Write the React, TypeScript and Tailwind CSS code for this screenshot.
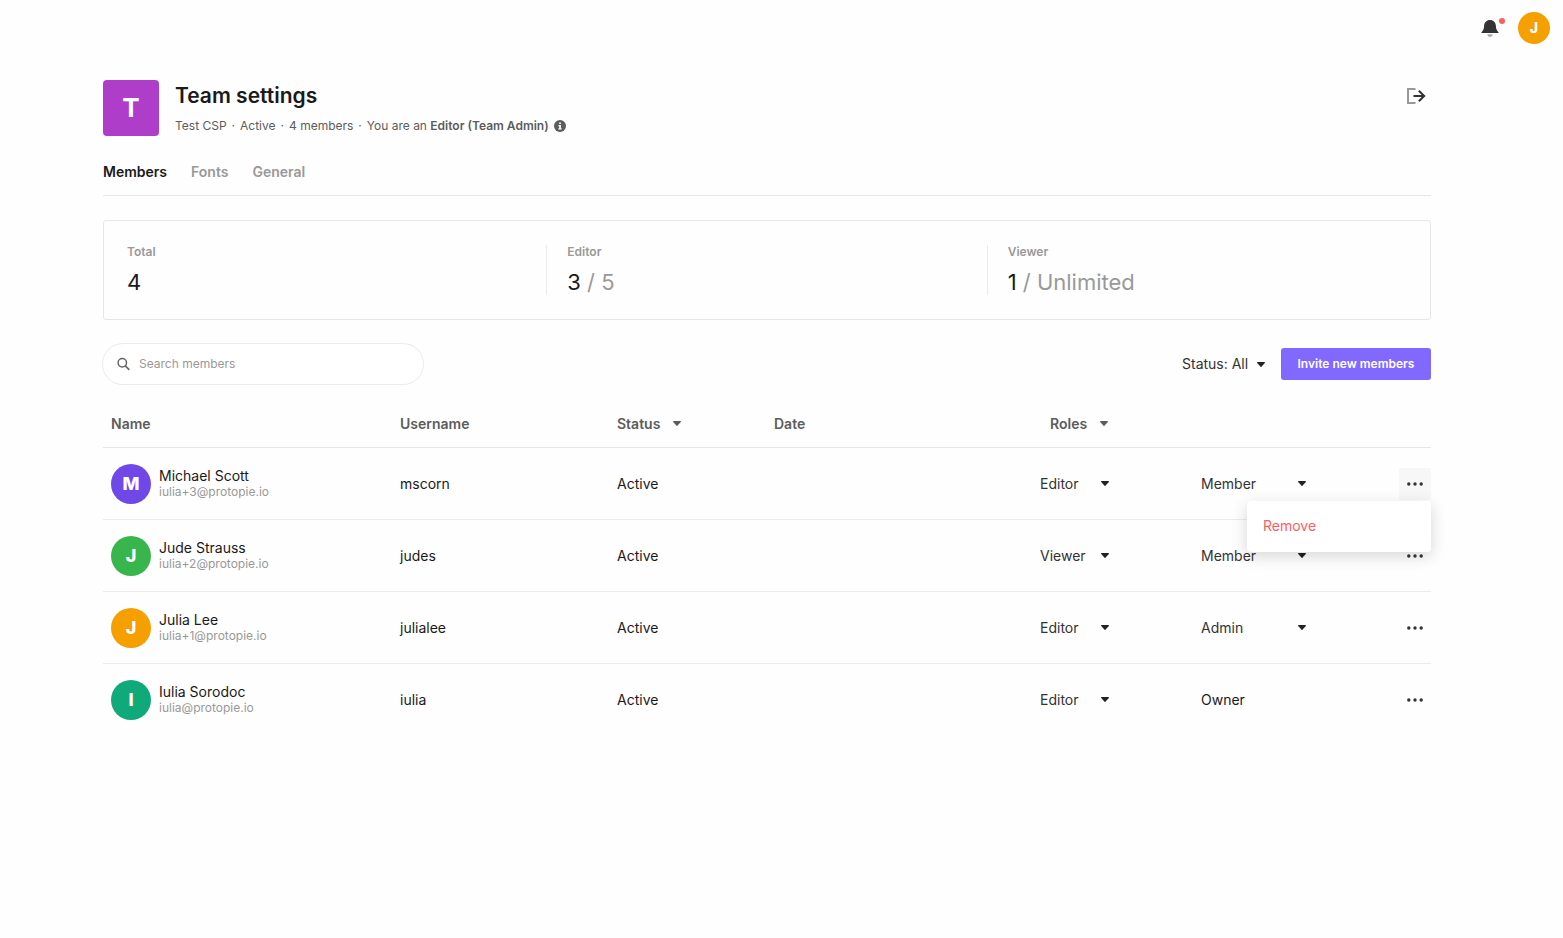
import { useState } from 'react';
import clsx from 'clsx';

type Member = {
  name: string;
  email: string;
  username: string;
  color: string;
  role: string;
  access: string;
};

const MEMBERS: Member[] = [
  { name: 'Michael Scott', email: 'iulia+3@protopie.io', username: 'mscorn', color: 'bg-[#7048e8]', role: 'Editor', access: 'Member' },
  { name: 'Jude Strauss', email: 'iulia+2@protopie.io', username: 'judes', color: 'bg-[#39b54e]', role: 'Viewer', access: 'Member' },
  { name: 'Julia Lee', email: 'iulia+1@protopie.io', username: 'julialee', color: 'bg-[#f59f00]', role: 'Editor', access: 'Admin' },
  { name: 'Iulia Sorodoc', email: 'iulia@protopie.io', username: 'iulia', color: 'bg-[#10a97a]', role: 'Editor', access: 'Owner' },
];

const STATS = [
  { label: 'Total', value: '4', limit: '' },
  { label: 'Editor', value: '3', limit: '5' },
  { label: 'Viewer', value: '1', limit: 'Unlimited' },
];

const TABS = ['Members', 'Fonts', 'General'];

function Caret({ className }: { className?: string }) {
  return (
    <svg viewBox="0 0 8 5" className={clsx('h-[5px] w-2', className)} fill="currentColor" aria-hidden="true">
      <path d="M.6 0h6.8c.5 0 .8.6.4 1L4.4 4.8a.5.5 0 0 1-.8 0L.2 1C-.2.6.1 0 .6 0Z" />
    </svg>
  );
}

function BellIcon() {
  return (
    <svg viewBox="0 -1 18 19" className="h-[19px] w-[18px]" aria-hidden="true">
      <path d="M9 0C5.500 0 3.300 2.500 3.100 5.800 3 8.600 2.600 10.200.4 12.600c-.2.2 0 .5.200.5h16.800c.2 0 .4-.3.200-.5-2.200-2.400-2.600-4-2.700-6.800C14.700 2.500 12.500 0 9 0Z" fill="#333" />
      <path d="M6.200 14.300h5.600C11.500 15.900 10.400 17 9 17s-2.500-1.100-2.800-2.700Z" fill="#aaa" />
    </svg>
  );
}

function LeaveIcon() {
  return (
    <svg viewBox="0 0 20 16" className="h-4 w-5" fill="none" aria-hidden="true">
      <path d="M9.500 1H2v14h7.500" stroke="#999" strokeWidth="2" />
      <path d="M7.500 8h10.800M12.800 2.800 18.200 8l-5.400 5.200" stroke="#333" strokeWidth="2" />
    </svg>
  );
}

function InfoIcon() {
  return (
    <svg viewBox="0 0 12 12" className="size-3" aria-hidden="true">
      <circle cx="6" cy="6" r="6" fill="#5c5c5c" />
      <path d="M5.200 2.500h1.700v1.500H5.200zM4.500 5h2.400v3.200h.7v1.200H4.400V8.200h.8V6.200h-.7z" fill="#fff" />
    </svg>
  );
}

function SearchIcon() {
  return (
    <svg viewBox="0 0 14 14" className="size-[14px]" fill="none" stroke="#666" aria-hidden="true">
      <circle cx="5.300" cy="5.800" r="4.200" strokeWidth="1.500" />
      <path d="m8.300 8.900 4 4" strokeWidth="1.600" />
    </svg>
  );
}

function DotsIcon() {
  return (
    <svg viewBox="0 0 16 4" className="h-1 w-4" fill="#333" aria-hidden="true">
      <circle cx="1.800" cy="2" r="1.700" />
      <circle cx="8" cy="2" r="1.700" />
      <circle cx="14.200" cy="2" r="1.700" />
    </svg>
  );
}

function Dropdown({ label, value, options, className }: { label: string; value: string; options: string[]; className: string }) {
  return (
    <div className={clsx('grid items-center', className)}>
      <select
        aria-label={label}
        defaultValue={value}
        className="col-start-1 row-start-1 w-full cursor-pointer appearance-none bg-transparent text-[#333] outline-none"
      >
        {options.map((o) => (
          <option key={o}>{o}</option>
        ))}
      </select>
      <Caret className="pointer-events-none col-start-1 row-start-1 justify-self-end text-[#222]" />
    </div>
  );
}

function TopBar() {
  return (
    <div className="flex h-14 items-center justify-end gap-[19px] pr-[13px]">
      <button type="button" aria-label="Notifications" className="relative">
        <BellIcon />
        <span className="absolute -top-px -right-[6px] size-[6px] rounded-full bg-[#ff5e5e]" />
      </button>
      <button type="button" className="size-8 rounded-full bg-[#f59f00] text-sm font-extrabold text-white">
        J
      </button>
    </div>
  );
}

function MemberRow({ member, menuOpen, onToggle }: { member: Member; menuOpen: boolean; onToggle: () => void }) {
  return (
    <tr className="h-[72px] *:border-b *:border-[#ebebeb] last:*:border-transparent">
      <td className="pl-2">
        <div className="flex items-center gap-2">
          <span className={clsx('flex size-10 shrink-0 items-center justify-center rounded-full text-lg font-extrabold text-white', member.color)}>
            {member.name[0]}
          </span>
          <div>
            <p className="leading-4">{member.name}</p>
            <p className="text-xs leading-4 text-[#999]">{member.email}</p>
          </div>
        </div>
      </td>
      <td className="pl-2">{member.username}</td>
      <td className="pl-2">Active</td>
      <td className="pl-2" />
      <td className="pl-2">
        <Dropdown label={`Role of ${member.name}`} value={member.role} options={['Editor', 'Viewer']} className="w-[69px]" />
      </td>
      <td className="pl-2">
        {member.access === 'Owner' ? (
          'Owner'
        ) : (
          <Dropdown label={`Access of ${member.name}`} value={member.access} options={['Member', 'Admin']} className="w-[105px]" />
        )}
      </td>
      <td>
        <div className="relative">
          <button
            type="button"
            aria-label={`More actions for ${member.name}`}
            onClick={onToggle}
            className={clsx('flex size-8 items-center justify-center rounded-xs', menuOpen && 'bg-[#f7f7f7]')}
          >
            <DotsIcon />
          </button>
          {menuOpen && (
            <div className="absolute top-full right-0 z-10 mt-px w-46 rounded-sm bg-white py-2 shadow-[0_4px_16px_rgba(0,0,0,0.16)]">
              <button type="button" className="block h-[35px] w-full px-4 text-left text-[#ff5e5e]">
                Remove
              </button>
            </div>
          )}
        </div>
      </td>
    </tr>
  );
}

export default function App() {
  const [tab, setTab] = useState('Members');
  const [openMenu, setOpenMenu] = useState<string | null>('mscorn');

  return (
    <div className="min-h-screen bg-[#fefefe] font-['Inter',sans-serif] text-sm text-[#1a1a1a]">
      <TopBar />

      <main className="pt-6 pr-[132px] pb-16 pl-[103px]">
        <header className="flex items-start gap-4">
          <div className="flex size-14 items-center justify-center rounded-sm bg-[#ae3ec9] text-[26px] font-bold text-white">T</div>
          <div className="flex-1">
            <h1 className="text-[21px] leading-8 font-semibold">Team settings</h1>
            <div className="mt-[6px] flex items-center gap-[5px] text-xs leading-4 text-[#5c5c5c]">
              <span>Test CSP</span>
              <span>·</span>
              <span>Active</span>
              <span>·</span>
              <span>4 members</span>
              <span>·</span>
              <span>
                You are an <b className="font-semibold">Editor (Team Admin)</b>
              </span>
              <InfoIcon />
            </div>
          </div>
          <button type="button" aria-label="Leave team" className="flex h-8 items-center pr-[5px]">
            <LeaveIcon />
          </button>
        </header>

        <nav className="mt-6 flex gap-6 border-b border-[#e6e6e6] pb-[11px]">
          {TABS.map((t) => (
            <button
              key={t}
              type="button"
              onClick={() => setTab(t)}
              className={clsx('h-6 font-semibold', t === tab ? 'text-[#1a1a1a]' : 'text-[#999]')}
            >
              {t}
            </button>
          ))}
        </nav>

        <section className="mt-6 flex gap-5 rounded-[3px] border border-[#e6e6e6] px-[23px] py-6">
          {STATS.map((s, i) => (
            <div key={s.label} className="contents">
              {i > 0 && <div className="w-px bg-[#ebebeb]" />}
              <div className="flex-1">
                <p className="text-xs leading-[14px] font-semibold text-[#999]">{s.label}</p>
                <p className="mt-[10px] text-[22px] leading-[26px]">
                  {s.value}
                  {s.limit && <span className="text-[#999]"> / {s.limit}</span>}
                </p>
              </div>
            </div>
          ))}
        </section>

        <div className="mt-6 flex items-center justify-between">
          <label className="flex h-10 w-80 items-center gap-2 rounded-full bg-white px-[14px] ring-1 ring-[#ebebeb]">
            <SearchIcon />
            <input
              type="text"
              aria-label="Search members"
              placeholder="Search members"
              className="min-w-0 flex-1 text-xs outline-none placeholder:text-[#999]"
            />
          </label>
          <div className="flex items-center gap-4">
            <Dropdown label="Filter by status" value="Status: All" options={['Status: All', 'Status: Active']} className="w-[83px]" />
            <button type="button" className="h-8 min-w-[150px] rounded-[3px] bg-[#8168ff] px-4 text-xs font-semibold text-white">
              Invite new members
            </button>
          </div>
        </div>

        <table className="mt-4 w-full table-fixed border-separate border-spacing-0 text-left">
          <colgroup>
            <col className="w-[289px]" />
            <col className="w-[217px]" />
            <col className="w-[157px]" />
            <col />
            <col className="w-[161px]" />
            <col className="w-[206px]" />
            <col className="w-8" />
          </colgroup>
          <thead>
            <tr className="h-12 text-[#5c5c5c] *:border-b *:border-[#e6e6e6]">
              <th className="pl-2 font-semibold">Name</th>
              <th className="pl-2 font-semibold">Username</th>
              <th className="pl-2 font-semibold">
                <button type="button" className="flex items-center gap-[13px]">
                  Status <Caret />
                </button>
              </th>
              <th className="pl-2 font-semibold">Date</th>
              <th className="pl-[18px] font-semibold">
                <button type="button" className="flex items-center gap-[13px]">
                  Roles <Caret />
                </button>
              </th>
              <th />
              <th />
            </tr>
          </thead>
          <tbody>
            {MEMBERS.map((m) => (
              <MemberRow
                key={m.username}
                member={m}
                menuOpen={openMenu === m.username}
                onToggle={() => setOpenMenu(openMenu === m.username ? null : m.username)}
              />
            ))}
          </tbody>
        </table>
      </main>
    </div>
  );
}
